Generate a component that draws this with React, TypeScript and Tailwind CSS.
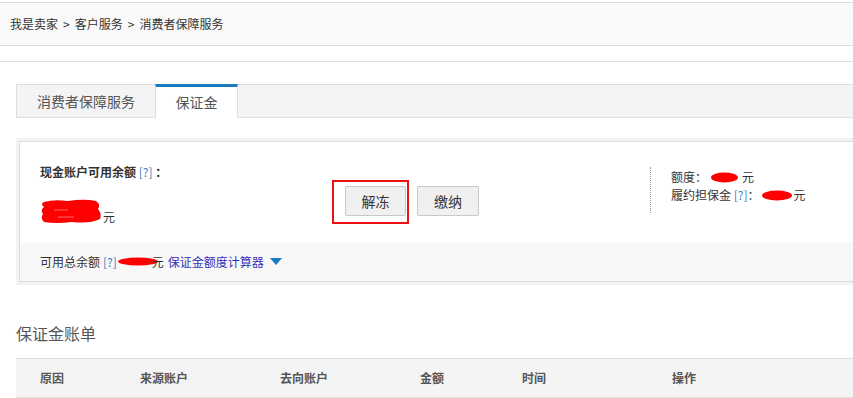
import React from "react";

const Blob = ({ w, h, className = "" }: { w: number; h: number; className?: string }) => (
  <svg width={w} height={h} viewBox={`0 0 ${w} ${h}`} className={className}>
    <ellipse cx={w / 2} cy={h / 2} rx={w / 2} ry={h / 2 - 0.5} fill="#ff0000" />
  </svg>
);

const BigBlob = () => (
  <svg width="62" height="26" viewBox="0 0 62 26">
    <path
      d="M4 4 Q14 1 28 3 Q40 1 50 2 L56 3 Q61 6 58 11 Q62 16 60 21 Q50 26 32 24 Q16 26 4 24 Q0 20 3 16 Q0 12 4 9 Q0 6 4 4 Z"
      fill="#ff0000"
    />
    <path d="M14 12 L28 12" stroke="#ff6666" strokeWidth="1" />
    <path d="M18 19 L34 19" stroke="#ff6666" strokeWidth="1" />
  </svg>
);

export default function App() {
  const font = { fontFamily: '"Noto Sans CJK SC", "Noto Sans", sans-serif' };
  return (
    <div className="w-[853px] h-[398px] overflow-hidden bg-white text-[12px] text-[#333]" style={font}>
      <div className="w-[900px]">
        {/* breadcrumb */}
        <div className="mt-[2px] h-[44px] border-y border-[#dddddd] bg-[#f9f9f9] flex items-center pl-[10px] text-[#333]">
          <span>我是卖家</span>
          <span className="mx-[5px]">&gt;</span>
          <span>客户服务</span>
          <span className="mx-[5px]">&gt;</span>
          <span>消费者保障服务</span>
        </div>
        <div className="h-[15px]" />
        <div className="border-t border-[#dddddd]" />
        <div className="h-[22px]" />

        <div className="pl-[16px]">
          {/* tabs */}
          <div className="h-[34px] border-y border-l border-[#dddddd] bg-[#f4f4f4] flex text-[14px] text-[#555]">
            <div className="w-[138px] flex items-center justify-center">消费者保障服务</div>
            <div className="w-[83px] -mt-px h-[34px] border-t-[3px] border-t-[#1b7ac0] border-x border-x-[#dddddd] bg-white flex items-center justify-center pb-[1px]">
              保证金
            </div>
          </div>

          <div className="h-[20px]" />

          {/* card */}
          <div className="bg-[#f3f3f3] p-[3px] pr-0">
            <div className="border border-[#dddddd] bg-white">
              <div className="relative h-[100px] flex">
                <div className="w-[290px] pl-[20px] pt-[21px]">
                  <div className="font-bold text-[#333] leading-[18px]">
                    现金账户可用余额 <span className="font-normal text-[#3d7fc1]">[?]</span> ：
                  </div>
                  <div className="mt-[17px] flex items-end">
                    <BigBlob />
                    <span className="ml-[1px] leading-[14px]">元</span>
                  </div>
                </div>
                <div className="relative pt-[44px] flex gap-[11px] pl-[35px]">
                  <button className="w-[61px] h-[30px] border border-[#c8c8c8] rounded-[2px] bg-[#f0f0f0] text-[14px] text-[#333]">
                    解冻
                  </button>
                  <button className="w-[62px] h-[30px] border border-[#c8c8c8] rounded-[2px] bg-[#f0f0f0] text-[14px] text-[#333]">
                    缴纳
                  </button>
                  <div className="absolute left-[22px] top-[38px] w-[77px] h-[44px] border-2 border-[#ee1111]" />
                </div>
                <div className="ml-[171px] mt-[25px] h-[46px] border-l border-dotted border-[#999] pl-[20px] pt-[1px] leading-[18px]">
                  <div className="flex items-center">
                    <span>额度：</span>
                    <Blob w={27} h={11} className="ml-[4px]" />
                    <span className="ml-[4px]">元</span>
                  </div>
                  <div className="flex items-center">
                    <span>履约担保金 <span className="text-[#3d7fc1]">[?]</span>：</span>
                    <Blob w={30} h={11} className="ml-[2px]" />
                    <span className="ml-[2px]">元</span>
                  </div>
                </div>
              </div>
              <div className="h-[39px] bg-[#f8f8f8] flex items-center pl-[20px]">
                <span>可用总余额 </span>
                <span className="text-[#3d7fc1] ml-[3px]">[?]</span>
                <span className="ml-[1px] -mr-[6px] flex items-center">
                  <Blob w={40} h={9} />
                </span>
                <span>元</span>
                <span className="ml-[4px] text-[#3333bb]">保证金额度计算器</span>
                <svg width="12" height="8" viewBox="0 0 12 8" className="ml-[6px]">
                  <path d="M0 0 L12 0 L6 7 Z" fill="#1b7ac0" />
                </svg>
              </div>
            </div>
          </div>

          <div className="h-[37px]" />
          <div className="text-[16px] text-[#555] leading-[22px]">保证金账单</div>
          <div className="h-[14px]" />

          <div className="h-[40px] border-y border-[#dddddd] bg-[#f4f4f4] flex items-center font-bold text-[#555]">
            <div className="w-[124px] pl-[24px]">原因</div>
            <div className="w-[140px]">来源账户</div>
            <div className="w-[140px]">去向账户</div>
            <div className="w-[102px]">金额</div>
            <div className="w-[150px]">时间</div>
            <div>操作</div>
          </div>
        </div>
      </div>
    </div>
  );
}
